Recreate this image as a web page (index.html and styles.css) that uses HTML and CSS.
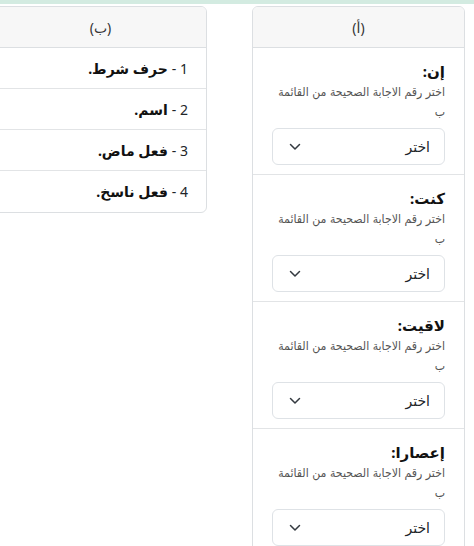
FILE: index.html
```html
<!DOCTYPE html>
<html lang="ar" dir="rtl">
<head>
<meta charset="utf-8">
<link rel="stylesheet" href="styles.css">
</head>
<body>
<div class="topbar"></div>
<main class="match">
  <section class="card">
    <div class="card-header">(أ)</div>
    <div class="item">
      <div class="q-title">إن:</div>
      <div class="q-help">اختر رقم الاجابة الصحيحة من القائمة ب</div>
      <div class="select"><span>اختر</span><svg class="chev" width="12" height="8" viewBox="0 0 12 8"><polyline points="1.5,1.5 6,6 10.5,1.5"/></svg></div>
    </div>
    <div class="item">
      <div class="q-title">كنت:</div>
      <div class="q-help">اختر رقم الاجابة الصحيحة من القائمة ب</div>
      <div class="select"><span>اختر</span><svg class="chev" width="12" height="8" viewBox="0 0 12 8"><polyline points="1.5,1.5 6,6 10.5,1.5"/></svg></div>
    </div>
    <div class="item">
      <div class="q-title">لاقيت:</div>
      <div class="q-help">اختر رقم الاجابة الصحيحة من القائمة ب</div>
      <div class="select"><span>اختر</span><svg class="chev" width="12" height="8" viewBox="0 0 12 8"><polyline points="1.5,1.5 6,6 10.5,1.5"/></svg></div>
    </div>
    <div class="item">
      <div class="q-title">إعصارا:</div>
      <div class="q-help">اختر رقم الاجابة الصحيحة من القائمة ب</div>
      <div class="select"><span>اختر</span><svg class="chev" width="12" height="8" viewBox="0 0 12 8"><polyline points="1.5,1.5 6,6 10.5,1.5"/></svg></div>
    </div>
  </section>
  <section class="card">
    <div class="card-header">(ب)</div>
    <div class="b-row"><span class="num">1 - </span><strong>حرف شرط.</strong></div>
    <div class="b-row"><span class="num">2 - </span><strong>اسم.</strong></div>
    <div class="b-row"><span class="num">3 - </span><strong>فعل ماض.</strong></div>
    <div class="b-row"><span class="num">4 - </span><strong>فعل ناسخ.</strong></div>
  </section>
</main>
</body>
</html>
```
FILE: styles.css
```css
* { box-sizing: border-box; }
html, body { margin: 0; padding: 0; background: #fff; }
body {
  font-family: "Noto Sans", "DejaVu Sans", sans-serif;
  color: #212529;
  overflow: hidden;
}
.topbar {
  height: 4px;
  background: #d3ebe1;
}
.match {
  display: flex;
  align-items: flex-start;
  gap: 45px;
  padding-top: 2px;
  margin-right: 9px;
}
.card {
  flex: none;
  width: 213px;
  border: 1px solid #dcdfe2;
  border-radius: 6px;
  background: #fff;
  overflow: hidden;
}
.card-header {
  height: 41px;
  background: #f7f7f7;
  border-bottom: 1px solid #dcdfe2;
  display: flex;
  align-items: center;
  justify-content: center;
  font-size: 14px;
  color: #333;
}
.item {
  padding: 13px 19px 9px 19px;
  border-bottom: 1px solid #e2e4e6;
}
.q-title {
  font-size: 15px;
  font-weight: 700;
  line-height: 21px;
  color: #111;
}
.q-help {
  font-family: "DejaVu Sans Condensed", "DejaVu Sans", sans-serif;
  font-size: 12.2px;
  line-height: 20px;
  color: #555;
  margin-bottom: 6px;
}
.select {
  height: 37px;
  border: 1px solid #dee2e6;
  border-radius: 6px;
  display: flex;
  align-items: center;
  justify-content: space-between;
  padding: 0 14px 0 16px;
  font-size: 14px;
  color: #212529;
}
.chev {
  fill: none;
  stroke: #343a40;
  stroke-width: 1.5;
  stroke-linecap: round;
  stroke-linejoin: round;
}
.b-row {
  height: 41px;
  padding: 0 18px;
  border-bottom: 1px solid #e2e4e6;
  display: flex;
  align-items: center;
  gap: 4px;
  font-size: 14px;
  color: #212529;
}
.b-row:last-child { border-bottom: none; }
.b-row strong { font-weight: 700; color: #111; }
```
